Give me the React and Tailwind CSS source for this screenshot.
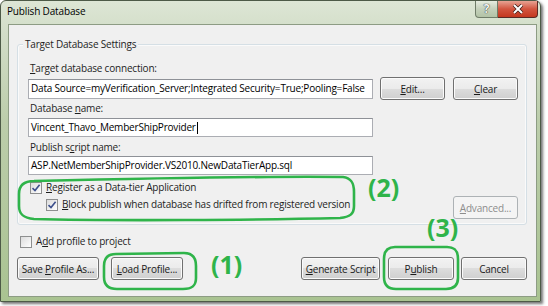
import React from "react";

const FONT = { fontFamily: '"Segoe UI", "Open Sans", "Noto Sans", sans-serif' };

function Btn({ w, children, disabled }) {
  return (
    <button
      className={
        "h-[23px] shrink-0 whitespace-nowrap rounded-[3px] border text-[10px] leading-none tracking-[-0.2px] " +
        (disabled
          ? "border-[#adb2b5] bg-[#f4f4f4] text-[#8d8d8d]"
          : "border-[#707070] bg-[linear-gradient(#f2f2f2,#ebebeb_50%,#dddddd_50%,#cfcfcf)] text-[#1b1b1b] shadow-[inset_0_0_0_1px_#fbfbfb]")
      }
      style={{ width: w }}
    >
      {children}
    </button>
  );
}

function Check({ checked }) {
  return (
    <span className="flex h-[12px] w-[12px] shrink-0 items-center justify-center border border-[#8e8f8f] bg-[linear-gradient(135deg,#dcdcdc,#fefefe)]">
      {checked && (
        <svg width="10" height="10" viewBox="0 0 10 10">
          <path d="M1.5 5.2 L4 7.6 L8.6 1.8" fill="none" stroke="#3c4f8c" strokeWidth="1.6" />
        </svg>
      )}
    </span>
  );
}

function Field({ children, w = 345, h = 20 }) {
  return (
    <div
      className="flex shrink-0 items-center overflow-hidden whitespace-nowrap border border-[#abadb3] border-t-[#8e9197] bg-white pl-[2px] text-black"
      style={{ width: w, height: h }}
    >
      {children}
    </div>
  );
}

export default function App() {
  return (
    <div className="relative h-[306px] w-[548px] overflow-hidden bg-white" style={FONT}>
      {/* window frame */}
      <div className="flex h-[302px] w-[541px] flex-col rounded-t-[6px] border border-[#4d5a47] bg-[linear-gradient(180deg,#dde6d5_0%,#d3dec9_10%,#bccdab_40%,#a9c391_100%)] shadow-[2px_2px_3px_rgba(0,0,0,0.55)]">
        <div className="flex h-[23px] shrink-0 items-start">
          <span className="mt-[5px] ml-[6px] text-[10px] leading-none tracking-[-0.15px] text-black">Publish Database</span>
          <div className="ml-auto mr-[2px] flex h-[17px]">
            <div className="flex w-[23px] items-center justify-center rounded-bl-[4px] border border-t-0 border-[#6f7c68] bg-[linear-gradient(#e6ece0,#c4d0ba_50%,#b3c3a6)] text-[12px] font-bold leading-none text-[#f4f4f4] [text-shadow:0_0_1px_#333,0_0_1px_#333]">
              ?
            </div>
            <div className="flex w-[40px] items-center justify-center rounded-br-[4px] border border-t-0 border-l-0 border-[#5a2a24] bg-[linear-gradient(#e8a393,#d2553f_50%,#c4381f)]">
              <svg width="12" height="10" viewBox="0 0 12 10">
                <path d="M2 1 L10 9 M10 1 L2 9" stroke="#3a1a14" strokeWidth="3.4" />
                <path d="M2 1 L10 9 M10 1 L2 9" stroke="#ffffff" strokeWidth="2" />
              </svg>
            </div>
          </div>
        </div>

        {/* client area */}
        <div className="mb-[4px] ml-[7px] mr-[3px] flex flex-1 flex-col border border-[#8d9c84] bg-[#f0f0f0] text-[10px] tracking-[-0.2px] text-[#1e1e1e]">
          {/* group box */}
          <div className="relative ml-[8px] mt-[19px] flex h-[181px] w-[510px] flex-col rounded-[3px] border border-[#d5dfe5] pl-[10px] pr-[8px] shadow-[inset_0_0_0_1px_#fafafa]">
            <span className="absolute -top-[8px] left-[5px] bg-[#f0f0f0] px-[2px] leading-[15px]">Target Database Settings</span>

            <div className="mt-[16px] h-[15px] pl-[2px] leading-[15px]">
              <u>T</u>arget database connection:
            </div>
            <div className="mt-[1px] flex h-[23px] items-center">
              <Field>Data Source=myVerification_Server;Integrated Security=True;Pooling=False</Field>
              <div className="ml-[7px]">
                <Btn w={65}>
                  <u>E</u>dit...
                </Btn>
              </div>
              <div className="ml-[8px]">
                <Btn w={65}>
                  <u>C</u>lear
                </Btn>
              </div>
            </div>

            <div className="mt-[1px] h-[15px] pl-[2px] leading-[15px]">
              Database <u>n</u>ame:
            </div>
            <div className="mt-[2px]">
              <Field h={19}>
                Vincent_Thavo_MemberShipProvider<span className="ml-[1px] inline-block h-[12px] w-px bg-black" />
              </Field>
            </div>

            <div className="mt-[3px] h-[15px] pl-[2px] leading-[15px]">
              Publish s<u>c</u>ript name:
            </div>
            <div className="mt-[1px]">
              <Field h={19}>ASP.NetMemberShipProvider.VS2010.NewDataTierApp.sql</Field>
            </div>

            <div className="mt-[5px] flex">
              <div className="flex flex-col">
                <div className="flex h-[15px] items-center gap-[4px] pl-[2px]">
                  <Check checked />
                  <span className="whitespace-nowrap leading-[15px]">
                    <u>R</u>egister as a Data-tier Application
                  </span>
                </div>
                <div className="mt-[2px] flex h-[15px] items-center gap-[4px] pl-[18px]">
                  <Check checked />
                  <span className="whitespace-nowrap leading-[15px]">
                    <u>B</u>lock publish when database has drifted from registered version
                  </span>
                </div>
              </div>
              <div className="ml-auto mt-[16px]">
                <Btn w={65} disabled>
                  <u>A</u>dvanced...
                </Btn>
              </div>
            </div>
          </div>

          <div className="ml-[11px] mt-[9px] flex h-[15px] items-center gap-[4px]">
            <Check />
            <span className="whitespace-nowrap leading-[15px]">
              A<u>d</u>d profile to project
            </span>
          </div>

          <div className="ml-[8px] mr-[9px] mt-[8px] flex">
            <Btn w={82}>
              Save <u>P</u>rofile As...
            </Btn>
            <div className="ml-[12px]">
              <Btn w={72}>
                <u>L</u>oad Profile...
              </Btn>
            </div>
            <div className="ml-auto">
              <Btn w={79}>
                <u>G</u>enerate Script
              </Btn>
            </div>
            <div className="ml-[8px]">
              <Btn w={66}>
                P<u>u</u>blish
              </Btn>
            </div>
            <div className="ml-[7px]">
              <Btn w={66}>Cancel</Btn>
            </div>
          </div>
        </div>
      </div>

      {/* hand-drawn annotations */}
      <svg className="pointer-events-none absolute left-0 top-0" width="548" height="306" viewBox="0 0 548 306">
        <g fill="none" stroke="#2fb44a" strokeWidth="2.6" strokeLinecap="round" strokeLinejoin="round">
          <path d="M34 181 C120 179 260 176 343 177 C352 178 354 184 354 192 L354 206 C354 214 350 217 340 218 C260 220 110 221 34 219 C23 218 19 214 19 206 L19 194 C19 185 24 181 34 181 Z" />
          <path d="M116 254 L184 253 C193 253 196 258 196 266 L196 278 C196 286 192 289 183 289 L117 289 C108 289 104 285 104 277 L104 266 C104 258 108 254 116 254 Z" />
          <path d="M395 247 L447 247 C455 247 458 251 458 259 L458 278 C458 285 454 289 446 289 L396 289 C388 289 384 285 384 277 L384 259 C384 251 388 247 395 247 Z" />
        </g>
      </svg>
      <span className="absolute left-[368px] top-[175px] text-[25px] font-bold leading-none text-[#2fb44a]">(2)</span>
      <span className="absolute left-[211px] top-[252px] text-[25px] font-bold leading-none text-[#2fb44a]">(1)</span>
      <span className="absolute left-[427px] top-[215px] text-[25px] font-bold leading-none text-[#2fb44a]">(3)</span>
    </div>
  );
}
